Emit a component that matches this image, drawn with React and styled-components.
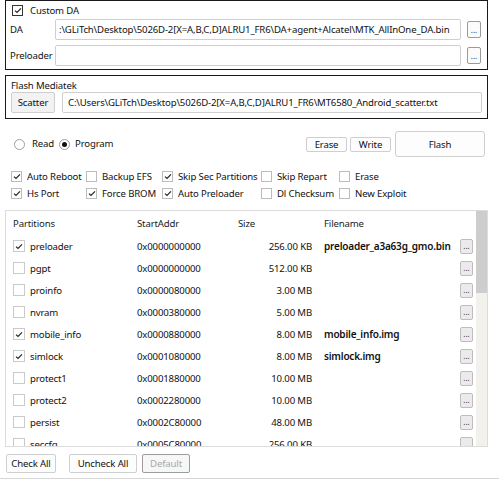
import React from "react";
import styled, { createGlobalStyle } from "styled-components";

const GlobalStyle = createGlobalStyle`
  html, body {
    margin: 0;
    padding: 0;
    background: #ffffff;
  }
  body {
    font-family: "Noto Sans", "Open Sans", sans-serif;
    font-size: 9.6px;
    letter-spacing: -0.15px;
    color: #111111;
  }
`;

const Frame = styled.div`
  width: 497px;
  height: 478px;
  border-right: 1px solid #d6d6d6;
  border-bottom: 1px solid #d6d6d6;
  padding-left: 5px;
  box-sizing: content-box;
  position: relative;
  overflow: hidden;
`;

const Inner = styled.div`
  width: 483px;
  display: flex;
  flex-direction: column;
`;

const Group = styled.div`
  border: 1px solid #1a1a1a;
  box-sizing: border-box;
  height: ${p => p.height}px;
  margin-top: ${p => p.top || 0}px;
  padding: ${p => p.pad};
  display: flex;
  flex-direction: column;
`;

const Row = styled.div`
  display: flex;
  align-items: center;
  gap: ${p => p.gap || 0}px;
  margin-top: ${p => p.top || 0}px;
  height: ${p => p.h}px;
`;

const Label = styled.span`
  width: ${p => p.w}px;
  flex: none;
  white-space: nowrap;
  line-height: 1;
`;

const Field = styled.div`
  box-sizing: border-box;
  width: ${p => p.w}px;
  height: ${p => p.h}px;
  border: 1px solid #cfcfcf;
  border-radius: 2px;
  background: #fff;
  padding-left: ${p => p.pl || 4}px;
  display: flex;
  align-items: center;
  overflow: hidden;
  white-space: nowrap;
  flex: none;
`;

const DotsButton = styled.div`
  box-sizing: border-box;
  width: ${p => p.w || 14}px;
  height: ${p => p.h || 17}px;
  border: 1px solid ${p => p.border || "#9a9a9a"};
  border-radius: 2px;
  background: ${p => p.bg || "#fbfbfb"};
  display: flex;
  align-items: flex-end;
  justify-content: center;
  font-size: 8px;
  letter-spacing: 0;
  line-height: 1;
  padding-bottom: 3px;
  color: #333;
  flex: none;
  margin-left: ${p => p.ml || 0}px;
`;

const Button = styled.div`
  box-sizing: border-box;
  width: ${p => p.w}px;
  height: ${p => p.h}px;
  border: 1px solid ${p => (p.disabled ? "#9c9c9c" : "#cfcfcf")};
  border-radius: ${p => p.r || 2}px;
  background: ${p => p.bg || "#fdfdfd"};
  color: ${p => (p.disabled ? "#a8a8a8" : "#111")};
  display: flex;
  align-items: center;
  justify-content: center;
  flex: none;
  white-space: nowrap;
`;

const Box = styled.span`
  box-sizing: border-box;
  width: ${p => p.size || 11}px;
  height: ${p => p.size || 11}px;
  border: 1px solid ${p => p.border || "#bcbcbc"};
  background: #fff;
  display: inline-flex;
  align-items: center;
  justify-content: center;
  flex: none;
`;

const CheckMark = ({ color = "#222" }) => (
  <svg width="8" height="7" viewBox="0 0 8 7">
    <polyline
      points="1,3.6 3,5.4 7,1.4"
      fill="none"
      stroke={color}
      strokeWidth="1.2"
    />
  </svg>
);

const Check = ({ on, size, border }) => (
  <Box size={size} border={border}>
    {on && <CheckMark />}
  </Box>
);

const Radio = styled.span`
  box-sizing: border-box;
  width: 11px;
  height: 11px;
  border-radius: 50%;
  border: 1px solid #9e9e9e;
  background: #fff;
  display: inline-flex;
  align-items: center;
  justify-content: center;
  flex: none;

  &::after {
    content: "";
    width: 5px;
    height: 5px;
    border-radius: 50%;
    background: ${p => (p.on ? "#111" : "transparent")};
  }
`;

const OptionsGrid = styled.div`
  display: grid;
  grid-template-columns: 75px 76px 99px 78px auto;
  grid-auto-rows: 17px;
  margin-top: 11px;
  padding-left: 6px;
`;

const Option = styled.div`
  display: flex;
  align-items: center;
  gap: 5px;
  white-space: nowrap;
`;

const Table = styled.div`
  box-sizing: border-box;
  margin-top: 8px;
  height: 237px;
  border: 1px solid #dcdcdc;
  display: flex;
  overflow: hidden;
`;

const TableBody = styled.div`
  flex: 1;
  overflow: hidden;
`;

const cols = "124px 101px 74px 1fr 13px";

const HeadRow = styled.div`
  display: grid;
  grid-template-columns: ${cols};
  height: 24px;
  align-items: center;
  padding: 0 3px 0 7px;
  color: #222;
`;

const DataRow = styled.div`
  display: grid;
  grid-template-columns: ${cols};
  height: 22px;
  align-items: center;
  padding: 0 3px 0 7px;
  flex: none;
`;

const NameCell = styled.div`
  display: flex;
  align-items: center;
  gap: 5px;
`;

const SizeCell = styled.div`
  text-align: ${p => (p.head ? "left" : "right")};
`;

const FileCell = styled.div`
  padding-left: 12px;
  font-weight: ${p => (p.head ? 400 : 600)};
  font-size: ${p => (p.head ? 9.6 : 10)}px;
  letter-spacing: ${p => (p.head ? -0.15 : -0.2)}px;
  white-space: nowrap;
  overflow: hidden;
`;

const ScrollBar = styled.div`
  width: 11px;
  flex: none;
  background: #f3f1ec;
  display: flex;
  flex-direction: column;
`;

const Thumb = styled.div`
  height: 82px;
  background: #cdcdcd;
`;

const Footer = styled.div`
  display: flex;
  margin-top: 7px;
  padding-left: 1px;
`;

const Spacer = styled.div`
  flex: 1;
`;

const partitions = [
  ["preloader", "0x0000000000", "256.00 KB", "preloader_a3a63g_gmo.bin", true],
  ["pgpt", "0x0000000000", "512.00 KB", "", false],
  ["proinfo", "0x0000080000", "3.00 MB", "", false],
  ["nvram", "0x0000380000", "5.00 MB", "", false],
  ["mobile_info", "0x0000880000", "8.00 MB", "mobile_info.img", true],
  ["simlock", "0x0001080000", "8.00 MB", "simlock.img", true],
  ["protect1", "0x0001880000", "10.00 MB", "", false],
  ["protect2", "0x0002280000", "10.00 MB", "", false],
  ["persist", "0x0002C80000", "48.00 MB", "", false],
  ["seccfg", "0x0005C80000", "256.00 KB", "", false]
];

const options = [
  ["Auto Reboot", true],
  ["Backup EFS", false],
  ["Skip Sec Partitions", true],
  ["Skip Repart", false],
  ["Erase", false],
  ["Hs Port", true],
  ["Force BROM", true],
  ["Auto Preloader", true],
  ["Dl Checksum", false],
  ["New Exploit", false]
];

export default function App() {
  return (
    <>
      <GlobalStyle />
      <Frame>
        <Inner>
          <Group height={70} pad="3px 6px 0 4px">
            <Row h={11} gap={7} top={1} style={{ paddingLeft: 2 }}>
              <Check on size={11} border="#333" />
              <span>Custom DA</span>
            </Row>
            <Row h={21} top={3}>
              <Label w={45}>DA</Label>
              <Field w={406} h={21} pl={3}>
                :\GLiTch\Desktop\5026D-2[X=A,B,C,D]ALRU1_FR6\DA+agent+Alcatel\MTK_AllInOne_DA.bin
              </Field>
              <DotsButton ml={6}>...</DotsButton>
            </Row>
            <Row h={21} top={5}>
              <Label w={45}>Preloader</Label>
              <Field w={406} h={21} />
              <DotsButton ml={6}>...</DotsButton>
            </Row>
          </Group>

          <Group height={44} top={5} pad="3px 7px 0 5px">
            <Row h={12}>
              <span>Flash Mediatek</span>
            </Row>
            <Row h={21} top={1} gap={7}>
              <Button w={44} h={21} bg="#f2f2f2">
                Scatter
              </Button>
              <Field w={420} h={21} pl={5}>
                C:\Users\GLiTch\Desktop\5026D-2[X=A,B,C,D]ALRU1_FR6\MT6580_Android_scatter.txt
              </Field>
            </Row>
          </Group>

          <Row h={26} top={12} style={{ paddingLeft: 9, paddingRight: 3 }}>
            <Radio />
            <Label w={27} style={{ paddingLeft: 7 }}>
              Read
            </Label>
            <Radio on />
            <Label w={60} style={{ paddingLeft: 5 }}>
              Program
            </Label>
            <Spacer />
            <Button w={41} h={15}>
              Erase
            </Button>
            <Button w={41} h={15} style={{ marginLeft: 3 }}>
              Write
            </Button>
            <Button w={90} h={26} r={3} style={{ marginLeft: 4 }}>
              Flash
            </Button>
          </Row>

          <OptionsGrid>
            {options.map(([label, on]) => (
              <Option key={label}>
                <Check on={on} />
                <span>{label}</span>
              </Option>
            ))}
          </OptionsGrid>

          <Table>
            <TableBody>
              <HeadRow>
                <div>Partitions</div>
                <div>StartAddr</div>
                <SizeCell head>Size</SizeCell>
                <FileCell head>Filename</FileCell>
                <div />
              </HeadRow>
              {partitions.map(([name, addr, size, file, on]) => (
                <DataRow key={name}>
                  <NameCell>
                    <Check on={on} size={12} border="#cacaca" />
                    <span>{name}</span>
                  </NameCell>
                  <div>{addr}</div>
                  <SizeCell>{size}</SizeCell>
                  <FileCell>{file}</FileCell>
                  <DotsButton w={13} h={15} bg="#ebebeb" border="#bdbdbd">
                    ...
                  </DotsButton>
                </DataRow>
              ))}
            </TableBody>
            <ScrollBar>
              <Thumb />
            </ScrollBar>
          </Table>

          <Footer>
            <Button w={50} h={19}>
              Check All
            </Button>
            <Button w={68} h={19} style={{ marginLeft: 13 }}>
              Uncheck All
            </Button>
            <Button w={48} h={19} disabled bg="#f7f7f7" style={{ marginLeft: 5 }}>
              Default
            </Button>
          </Footer>
        </Inner>
      </Frame>
    </>
  );
}
